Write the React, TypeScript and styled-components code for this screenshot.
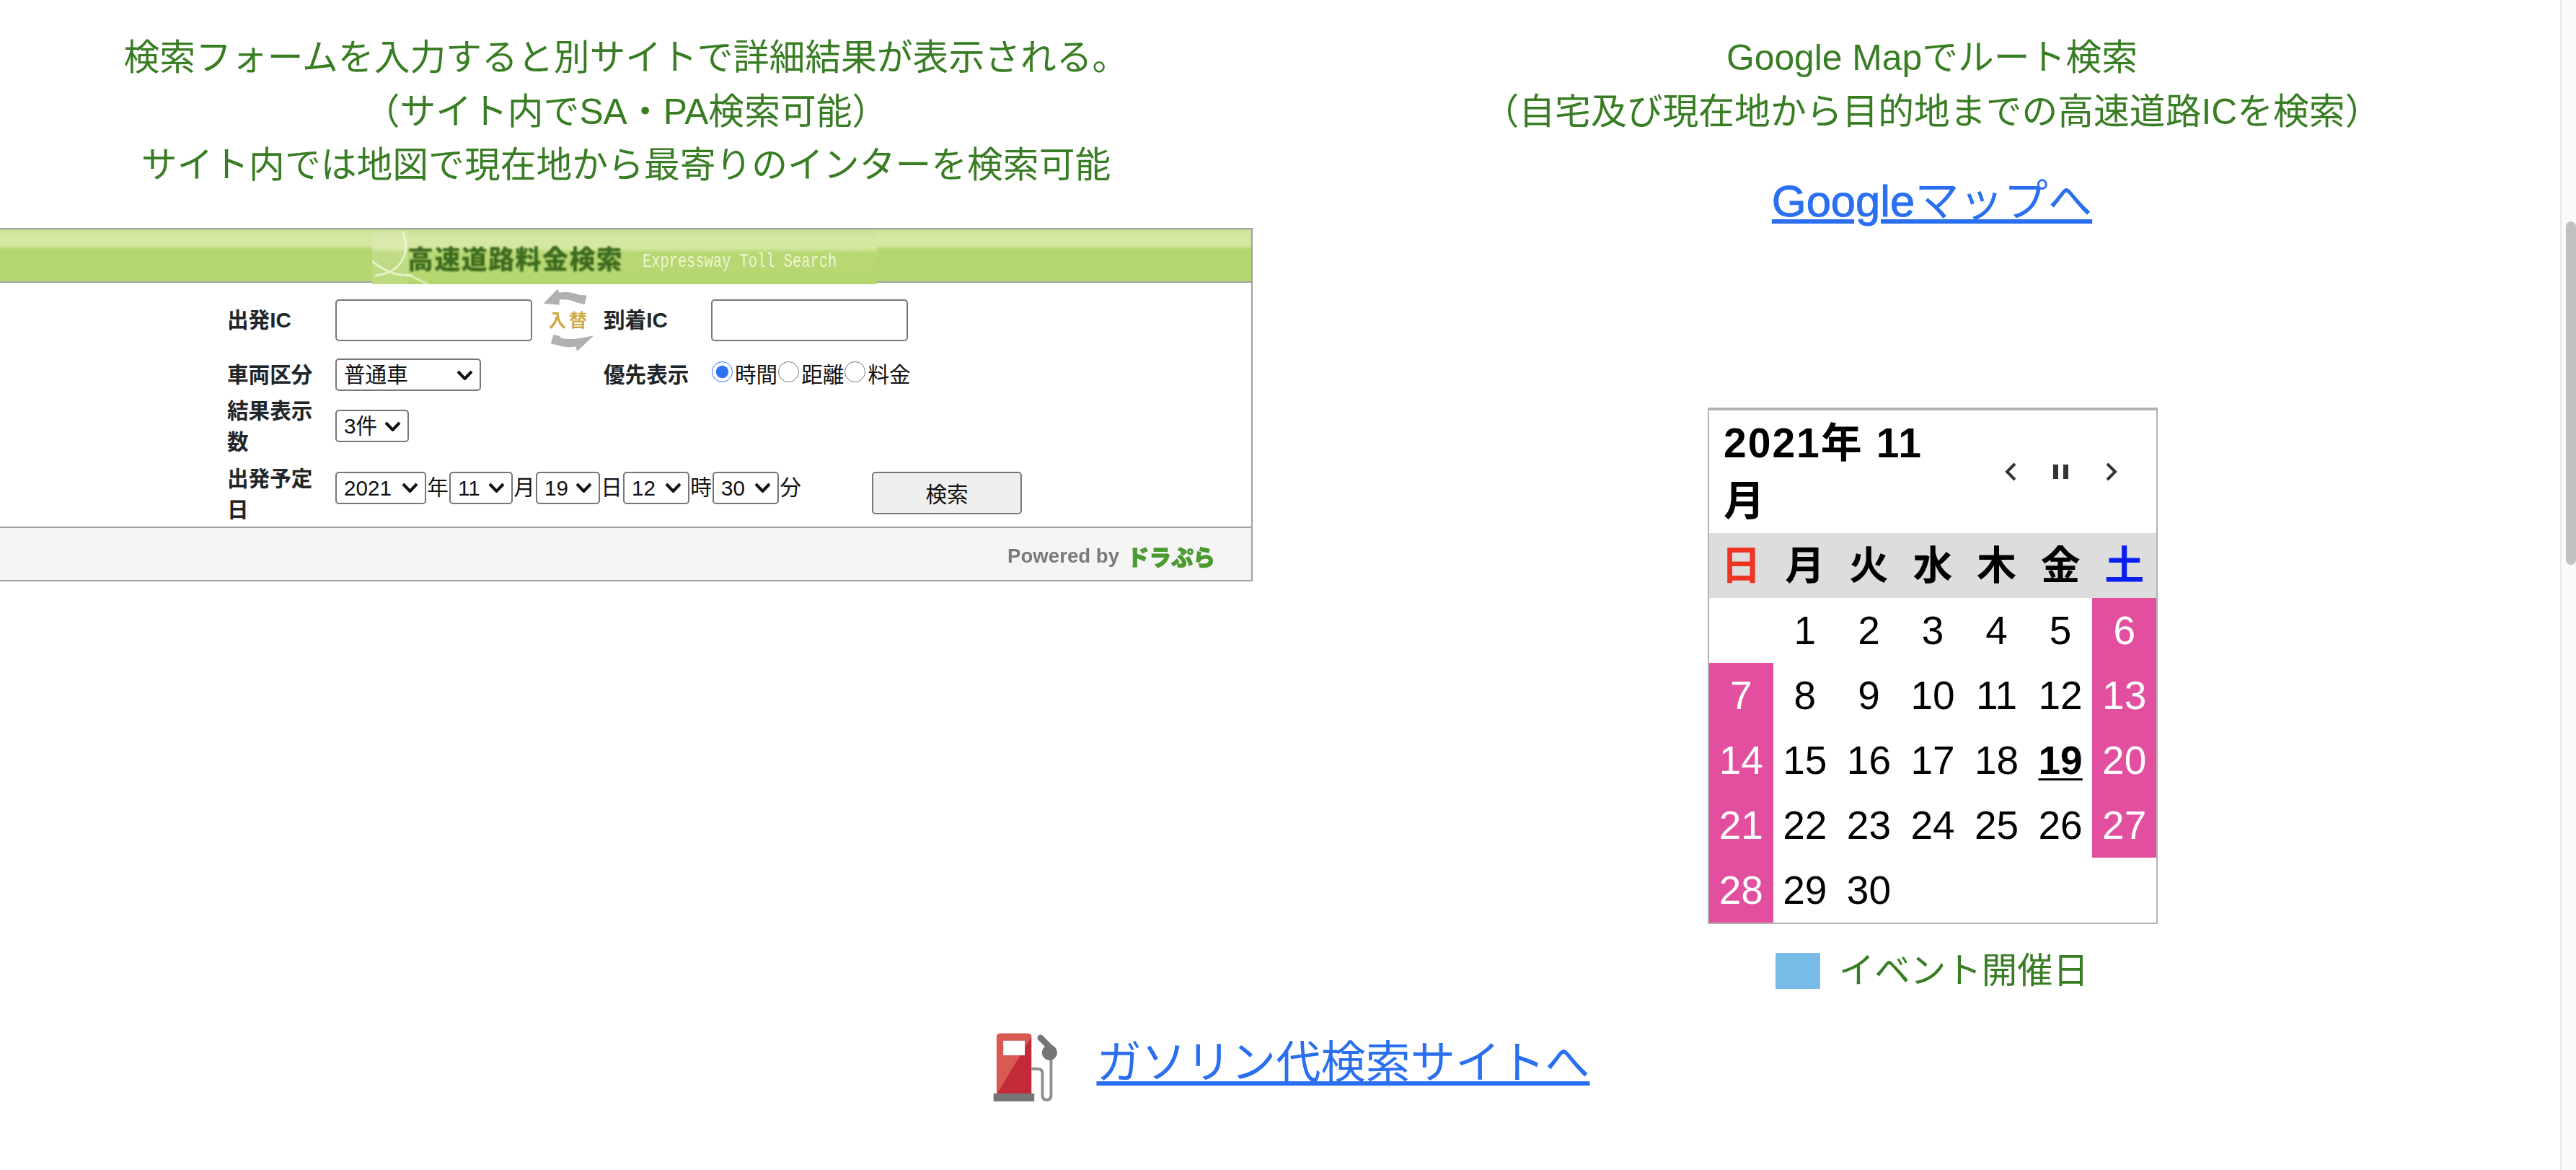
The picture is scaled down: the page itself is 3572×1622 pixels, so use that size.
import styled, { createGlobalStyle } from "styled-components";

const WEEKDAYS = ["日", "月", "火", "水", "木", "金", "土"];
const TODAY = 19;
const CHEVRON = `url("data:image/svg+xml,%3Csvg xmlns='http://www.w3.org/2000/svg' width='23' height='14' viewBox='0 0 23 14'%3E%3Cpath d='M2 2l9.5 10L21 2' fill='none' stroke='%23111' stroke-width='4'/%3E%3C/svg%3E")`;

export default function App() {
  return (
    <Screen>
      <GlobalStyle />
      <Page>
        <Columns>
          <LeftColumn>
            <Note>
              検索フォームを入力すると別サイトで詳細結果が表示される。
              <br />
              （サイト内でSA・PA検索可能）
              <br />
              サイト内では地図で現在地から最寄りのインターを検索可能
            </Note>
            <TollWidget />
          </LeftColumn>
          <RightColumn>
            <Note>
              Google Mapでルート検索
              <br />
              （自宅及び現在地から目的地までの高速道路ICを検索）
            </Note>
            <MapLink href="#">
              <LatinWord>Google</LatinWord>マップへ
            </MapLink>
            <Calendar />
            <Legend>
              <LegendSwatch />
              イベント開催日
            </Legend>
          </RightColumn>
        </Columns>
        <FuelRow>
          <FuelIcon />
          <BigLink href="#">ガソリン代検索サイトへ</BigLink>
        </FuelRow>
      </Page>
      <ScrollTrack>
        <ScrollThumb />
      </ScrollTrack>
    </Screen>
  );
}

function TollWidget() {
  return (
    <Widget>
      <WidgetHeader>
        <Banner>
          <BannerSwirl viewBox="0 0 700 74" aria-hidden="true">
            <path
              d="M42 0c12 30 0 58-38 62M56 62c-18 0-34-2-56-20"
              fill="none"
              stroke="#eef6d4"
              strokeWidth="3"
              opacity="0.8"
            />
            <path d="M48 60l30 14" stroke="#eef6d4" strokeWidth="3" opacity="0.7" />
            <rect x="0" y="0" width="50" height="74" fill="#fff" opacity="0.12" />
          </BannerSwirl>
          <BannerTitle>高速道路料金検索</BannerTitle>
          <BannerSub>Expressway Toll Search</BannerSub>
        </Banner>
      </WidgetHeader>
      <FormGrid>
        <FieldLabel>出発IC</FieldLabel>
        <SwapCell>
          <TextInput />
          <SwapIcon />
        </SwapCell>
        <FieldLabel>到着IC</FieldLabel>
        <TextInput />

        <FieldLabel>車両区分</FieldLabel>
        <div>
          <Select $width={202} defaultValue="普通車">
            <option>普通車</option>
            <option>軽自動車</option>
            <option>大型車</option>
          </Select>
        </div>
        <FieldLabel>優先表示</FieldLabel>
        <RadioGroup>
          <Radio type="radio" name="priority" defaultChecked />
          時間
          <Radio type="radio" name="priority" />
          距離
          <Radio type="radio" name="priority" />
          料金
        </RadioGroup>

        <FieldLabel>結果表示数</FieldLabel>
        <WideCell>
          <Select $width={102} defaultValue="3件">
            <option>3件</option>
            <option>5件</option>
          </Select>
        </WideCell>

        <FieldLabel $top>出発予定日</FieldLabel>
        <DateRow>
          <Select $width={126}><option>2021</option></Select>
          <DateUnit>年</DateUnit>
          <Select $width={88}><option>11</option></Select>
          <DateUnit>月</DateUnit>
          <Select $width={89}><option>19</option></Select>
          <DateUnit>日</DateUnit>
          <Select $width={92}><option>12</option></Select>
          <DateUnit>時</DateUnit>
          <Select $width={92}><option>30</option></Select>
          <DateUnit>分</DateUnit>
          <SearchButton type="button">検索</SearchButton>
        </DateRow>
      </FormGrid>
      <WidgetFooter>
        <PoweredBy>Powered by</PoweredBy>
        <DoraPlaLogo>ドラぷら</DoraPlaLogo>
      </WidgetFooter>
    </Widget>
  );
}

function Calendar() {
  const cells: (number | null)[] = [null];
  for (let day = 1; day <= 30; day++) cells.push(day);
  while (cells.length % 7 !== 0) cells.push(null);

  return (
    <CalendarBox>
      <CalendarHeader>
        <CalendarTitle>2021年 11 月</CalendarTitle>
        <CalendarNav>
          <NavButton>
            <svg width="18" height="28" viewBox="0 0 18 28">
              <path d="M15 3L4 14l11 11" fill="none" stroke="#333" strokeWidth="4" />
            </svg>
          </NavButton>
          <NavButton>
            <svg width="22" height="20" viewBox="0 0 22 20">
              <path d="M0 0h7v20H0zM14 0h7v20h-7z" fill="#333" />
            </svg>
          </NavButton>
          <NavButton>
            <svg width="18" height="28" viewBox="0 0 18 28">
              <path d="M3 3l11 11L3 25" fill="none" stroke="#333" strokeWidth="4" />
            </svg>
          </NavButton>
        </CalendarNav>
      </CalendarHeader>
      <WeekRow>
        {WEEKDAYS.map((day, index) => (
          <WeekCell key={day} $index={index}>
            {day}
          </WeekCell>
        ))}
      </WeekRow>
      <DayGrid>
        {cells.map((day, index) => (
          <DayCell
            key={index}
            $holiday={day !== null && (index % 7 === 0 || index % 7 === 6)}
            $today={day === TODAY}
          >
            {day}
          </DayCell>
        ))}
      </DayGrid>
    </CalendarBox>
  );
}

function SwapIcon() {
  return (
    <SwapSvg viewBox="150 25 220 270" aria-hidden="true">
      <path
        d="M155 90l58-60 8 14c30-4 62 0 82 10l32 2-8 38-32-8c-24-12-48-14-73-12l-1 22z"
        fill="#b0b0b0"
      />
      <path
        d="M196 220l28 6v6c26 8 52 8 76 4l65-12-70 66-5-20c-28 4-54 2-76-6l-28-6z"
        fill="#b0b0b0"
      />
      <SwapText x="176" y="186">入</SwapText>
      <SwapText x="262" y="186">替</SwapText>
    </SwapSvg>
  );
}

function FuelIcon() {
  return (
    <FuelSvg viewBox="55 40 275 295" aria-hidden="true">
      <path
        d="M84 42h118a14 14 0 0 1 14 14v240H70V56a14 14 0 0 1 14-14z"
        fill="#c22a3a"
      />
      <path d="M84 42h118a14 14 0 0 1 14 14L70 296V56a14 14 0 0 1 14-14z" fill="#d95a52" />
      <rect x="98" y="72" width="90" height="61" fill="#fff" />
      <rect x="57" y="293" width="171" height="33" fill="#757575" />
      <path
        d="M216 190h26q20 0 20 20v90q0 20 18 20t18-20V140"
        fill="none"
        stroke="#8f8f8f"
        strokeWidth="12"
      />
      <path d="M254 60l42 42" stroke="#757575" strokeWidth="26" strokeLinecap="round" />
      <circle cx="292" cy="122" r="32" fill="#757575" />
    </FuelSvg>
  );
}

const GlobalStyle = createGlobalStyle`
  html, body {
    margin: 0;
    padding: 0;
    overflow: hidden;
    background: #fff;
  }
`;

const Screen = styled.div`
  display: flex;
  width: 3572px;
  height: 1622px;
  overflow: hidden;
  font-family: "Liberation Sans", "Noto Sans CJK JP", sans-serif;
`;

const Page = styled.main`
  flex: 1;
  min-width: 0;
`;

const ScrollTrack = styled.div`
  flex: none;
  width: 22px;
  box-sizing: border-box;
  padding: 307px 0 0 6px;
  background: #fafafa;
  border-left: 2px solid #e8e8e8;
`;

const ScrollThumb = styled.div`
  width: 14px;
  height: 476px;
  background: #c1c1c1;
  border-radius: 7px;
`;

const Columns = styled.div`
  display: flex;
  gap: 72px;
  padding-top: 43px;
`;

const LeftColumn = styled.section`
  flex: none;
  width: 1736px;
`;

const RightColumn = styled.section`
  flex: 1;
  display: flex;
  flex-direction: column;
  align-items: center;
`;

const Note = styled.p`
  margin: 0;
  font-size: 49.8px;
  line-height: 74.5px;
  text-align: center;
  color: #387d23;
`;

const MapLink = styled.a`
  margin-top: 41px;
  font-size: 61.5px;
  line-height: 92px;
  color: #2a6ff0;
  text-decoration-thickness: 6px;
  text-underline-offset: 4px;
`;

const LatinWord = styled.span`
  -webkit-text-stroke: 1px #2a6ff0;
`;

const BigLink = styled(MapLink)`
  margin-top: 0;
  font-size: 62.2px;
  line-height: 84px;
`;

const Widget = styled.div`
  margin-top: 49px;
  width: 1737px;
  box-sizing: border-box;
  background: #fff;
  border: 2px solid #a0a0a0;
  border-left: none;
`;

const WidgetHeader = styled.header`
  position: relative;
  height: 72px;
  background: linear-gradient(#c4dd8d 0, #d5e8a2 6px, #d5e8a2 22px, #b5d76f 28px, #b5d76f 100%);
  border-bottom: 2px solid #a0a0a0;
`;

const Banner = styled.div`
  position: absolute;
  top: 2px;
  left: 516px;
  width: 700px;
  height: 74px;
  overflow: hidden;
  background: linear-gradient(#c9df98 0, #d5e8a2 10px, #d5e8a2 24px, #b8d874 30px, #b5d76f 100%);
`;

const BannerSwirl = styled.svg`
  position: absolute;
  inset: 0;
  width: 700px;
  height: 74px;
`;

const BannerTitle = styled.span`
  position: absolute;
  top: 15px;
  left: 49px;
  font-family: "Noto Sans CJK JP", sans-serif;
  font-size: 36px;
  font-weight: 900;
  line-height: 44px;
  letter-spacing: 1.4px;
  white-space: nowrap;
  color: #3d6b1f;
  filter: blur(0.9px);
`;

const BannerSub = styled.span`
  position: absolute;
  top: 31px;
  left: 375px;
  font-family: "Liberation Mono", monospace;
  font-size: 20.4px;
  line-height: 24px;
  white-space: nowrap;
  color: #eef5d5;
  transform: scaleY(1.35);
  filter: blur(0.4px);
`;

const FormGrid = styled.div`
  display: grid;
  grid-template-columns: 150px 372px 149px 1fr;
  grid-template-rows: 96px 56px 86px 96px;
  box-sizing: border-box;
  padding: 4px 0 0 315px;
  font-size: 29.6px;
  color: #111;
  align-items: center;
`;

const FieldLabel = styled.label<{ $top?: boolean }>`
  padding-right: 16px;
  font-size: 29.6px;
  font-weight: 700;
  line-height: 43px;
  color: #212529;
  align-self: ${(props) => (props.$top ? "end" : "center")};
  margin-bottom: ${(props) => (props.$top ? "2px" : "0")};
`;

const SwapCell = styled.div`
  display: flex;
  align-items: center;
  gap: 14px;
`;

const SwapSvg = styled.svg`
  flex: none;
  width: 73px;
  height: 90px;
  filter: blur(0.5px);
`;

const SwapText = styled.text`
  font-family: "Noto Sans CJK JP", sans-serif;
  font-size: 74px;
  font-weight: 700;
  fill: #cfa944;
`;

const TextInput = styled.input`
  width: 273px;
  height: 58px;
  box-sizing: border-box;
  flex: none;
  border: 2px solid #767676;
  border-radius: 5px;
  background: #fff;
`;

const Select = styled.select<{ $width: number }>`
  appearance: none;
  flex: none;
  display: block;
  width: ${(props) => props.$width}px;
  height: 45px;
  box-sizing: border-box;
  padding: 0 0 0 10px;
  font-family: "Liberation Sans", "Noto Sans CJK JP", sans-serif;
  font-size: 29.6px;
  color: #111;
  background: #fff ${CHEVRON} no-repeat right 9px center;
  border: 2px solid #767676;
  border-radius: 5px;
`;

const RadioGroup = styled.div`
  display: flex;
  align-items: center;
  line-height: 43px;
`;

const Radio = styled.input`
  flex: none;
  width: 29px;
  height: 29px;
  margin: -8px 3px 0 1px;
  accent-color: #2a74f0;
`;

const WideCell = styled.div`
  grid-column: 2 / 5;
`;

const DateRow = styled.div`
  grid-column: 2 / 5;
  align-self: start;
  display: flex;
  align-items: flex-start;
  padding-top: 20px;
  line-height: 43px;
`;

const DateUnit = styled.span`
  flex: none;
  width: 32px;
  text-align: center;
`;

const SearchButton = styled.button`
  flex: none;
  width: 208px;
  height: 59px;
  margin-left: 97px;
  box-sizing: border-box;
  font-family: "Liberation Sans", "Noto Sans CJK JP", sans-serif;
  font-size: 29.6px;
  color: #111;
  background: #efefef;
  border: 2px solid #767676;
  border-radius: 5px;
`;

const WidgetFooter = styled.footer`
  display: flex;
  justify-content: flex-end;
  align-items: center;
  gap: 11px;
  height: 74px;
  padding: 6px 50px 0 0;
  box-sizing: border-box;
  background: #f5f5f5;
  border-top: 2px solid #a0a0a0;
`;

const PoweredBy = styled.span`
  font-size: 27.6px;
  font-weight: 700;
  color: #7a7a7a;
  filter: blur(0.5px);
`;

const DoraPlaLogo = styled.span`
  font-family: "Noto Sans CJK JP", sans-serif;
  font-size: 30.5px;
  font-weight: 900;
  line-height: 34px;
  color: #4b9a2e;
  -webkit-text-stroke: 1px #4b9a2e;
  filter: blur(0.4px);
`;

const CalendarBox = styled.div`
  width: 624px;
  margin: 240px 0 0 2px;
  box-sizing: border-box;
  border: 2px solid #b3b3b3;
  border-top-width: 4px;
  background: #fff;
`;

const CalendarHeader = styled.div`
  display: flex;
  justify-content: space-between;
  align-items: center;
  height: 170px;
  padding: 0 27px 0 20px;
`;

const CalendarTitle = styled.div`
  width: 320px;
  font-size: 57px;
  font-weight: 700;
  line-height: 80px;
  letter-spacing: 2px;
  color: #000;
`;

const CalendarNav = styled.div`
  display: flex;
  flex: none;
`;

const NavButton = styled.span`
  display: flex;
  justify-content: center;
  align-items: center;
  width: 70px;
`;

const WeekRow = styled.div`
  display: grid;
  grid-template-columns: repeat(7, 1fr);
  height: 90px;
  background: #ddd;
`;

const WEEK_COLORS: Record<number, string> = { 0: "#ee3524", 6: "#0a1ef0" };

const WeekCell = styled.div<{ $index: number }>`
  font-size: 55px;
  font-weight: 700;
  line-height: 90px;
  text-align: center;
  color: ${(props) => WEEK_COLORS[props.$index] ?? "#000"};
`;

const DayGrid = styled.div`
  display: grid;
  grid-template-columns: repeat(7, 1fr);
  grid-auto-rows: 90px;
`;

const DayCell = styled.div<{ $holiday: boolean; $today: boolean }>`
  font-size: 55px;
  line-height: 90px;
  text-align: center;
  color: ${(props) => (props.$holiday ? "#fff" : "#000")};
  background: ${(props) => (props.$holiday ? "#e24f9e" : "transparent")};
  font-weight: ${(props) => (props.$today ? 700 : 400)};
  text-decoration: ${(props) => (props.$today ? "underline" : "none")};
  text-decoration-thickness: 3px;
  text-underline-offset: 6px;
`;

const Legend = styled.div`
  display: flex;
  align-items: center;
  gap: 26px;
  margin-top: 40px;
  font-size: 49.5px;
  line-height: 50px;
  color: #387d23;
`;

const LegendSwatch = styled.span`
  flex: none;
  width: 62px;
  height: 50px;
  background: #78bbe6;
`;

const FuelRow = styled.div`
  display: flex;
  justify-content: center;
  align-items: flex-start;
  gap: 52px;
  margin-top: 61px;
  padding-left: 32px;
`;

const FuelSvg = styled.svg`
  flex: none;
  width: 91px;
  height: 98px;
`;
